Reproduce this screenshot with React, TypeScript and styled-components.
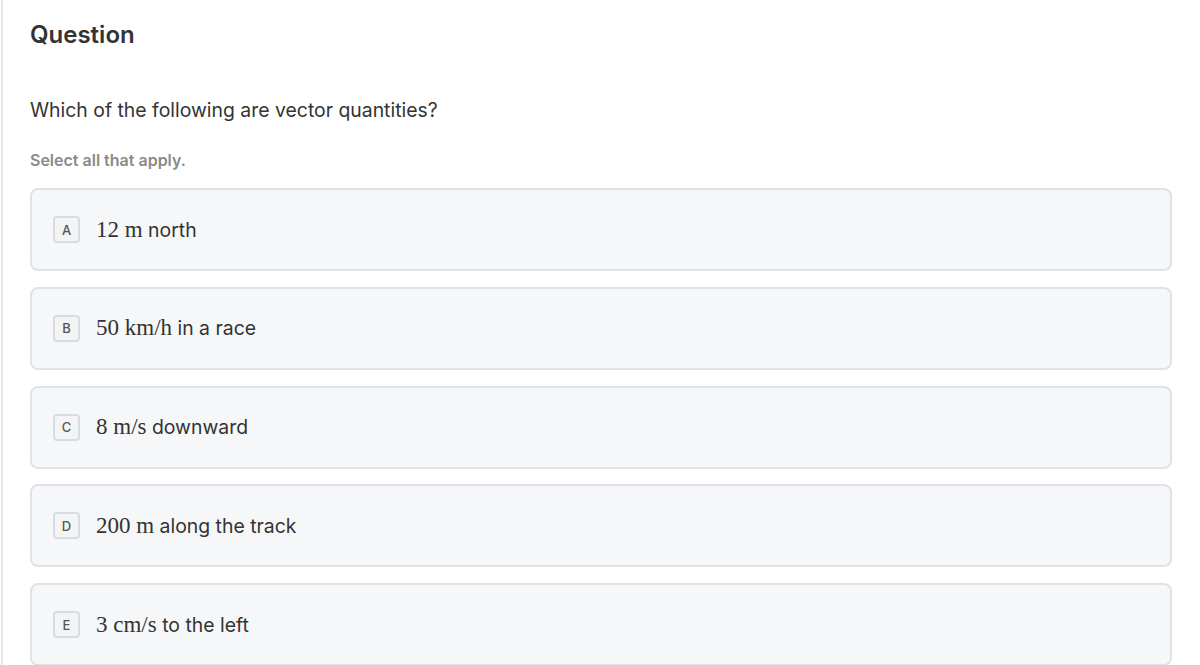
import React from 'react';
import styled, { createGlobalStyle } from 'styled-components';

const GlobalStyle = createGlobalStyle`
    html, body {
        margin: 0;
        padding: 0;
        background: #ffffff;
    }
    body {
        font-family: Inter, 'Noto Sans', 'Liberation Sans', sans-serif;
        color: #333333;
    }
`;

type Option = {
    key: string;
    math: string;
    text: string;
};

const options: Option[] = [
    { key: 'A', math: '12 m', text: 'north' },
    { key: 'B', math: '50 km/h', text: 'in a race' },
    { key: 'C', math: '8 m/s', text: 'downward' },
    { key: 'D', math: '200 m', text: 'along the track' },
    { key: 'E', math: '3 cm/s', text: 'to the left' },
];

const App = () => {
    return (
        <>
            <GlobalStyle />
            <Panel>
                <Title>Question</Title>
                <Prompt>Which of the following are vector quantities?</Prompt>
                <Hint>Select all that apply.</Hint>
                <OptionList>
                    {options.map((item) => (
                        <OptionCard key={item.key}>
                            <Badge>{item.key}</Badge>
                            <Label>
                                <MathText>{item.math}</MathText> {item.text}
                            </Label>
                        </OptionCard>
                    ))}
                </OptionList>
            </Panel>
        </>
    );
};

const Panel = styled.div`
    box-sizing: border-box;
    min-height: 665px;
    padding: 20px 28px 0 27px;
    margin-left: 1px;
    border-left: 2px solid #e6e6e6;
`;

const Title = styled.h2`
    margin: 0;
    font-size: 24px;
    line-height: 30px;
    font-weight: 600;
    color: #333333;
`;

const Prompt = styled.p`
    margin: 47px 0 0;
    font-size: 19.4px;
    line-height: 26px;
    font-weight: 400;
    color: #333333;
`;

const Hint = styled.p`
    margin: 27px 0 0;
    font-size: 16px;
    line-height: 20px;
    font-weight: 600;
    color: #8a8a8a;
`;

const OptionList = styled.div`
    display: flex;
    flex-direction: column;
    gap: 15.75px;
    margin-top: 18px;
`;

const OptionCard = styled.div`
    box-sizing: border-box;
    height: 83px;
    display: flex;
    align-items: center;
    gap: 16px;
    padding: 0 21px;
    background: #f6f7f9;
    border: 2px solid #dfe2e6;
    border-radius: 8px;
`;

const Badge = styled.div`
    box-sizing: border-box;
    width: 27px;
    height: 27px;
    display: flex;
    align-items: center;
    justify-content: center;
    font-size: 13px;
    font-weight: 500;
    color: #555555;
    background: #f3f4f6;
    border: 2px solid #d8dbe0;
    border-radius: 4px;
`;

const Label = styled.span`
    font-size: 19.4px;
    color: #333333;
`;

const MathText = styled.span`
    font-family: 'Liberation Serif', 'DejaVu Serif', serif;
    font-size: 23px;
`;

export default App;
